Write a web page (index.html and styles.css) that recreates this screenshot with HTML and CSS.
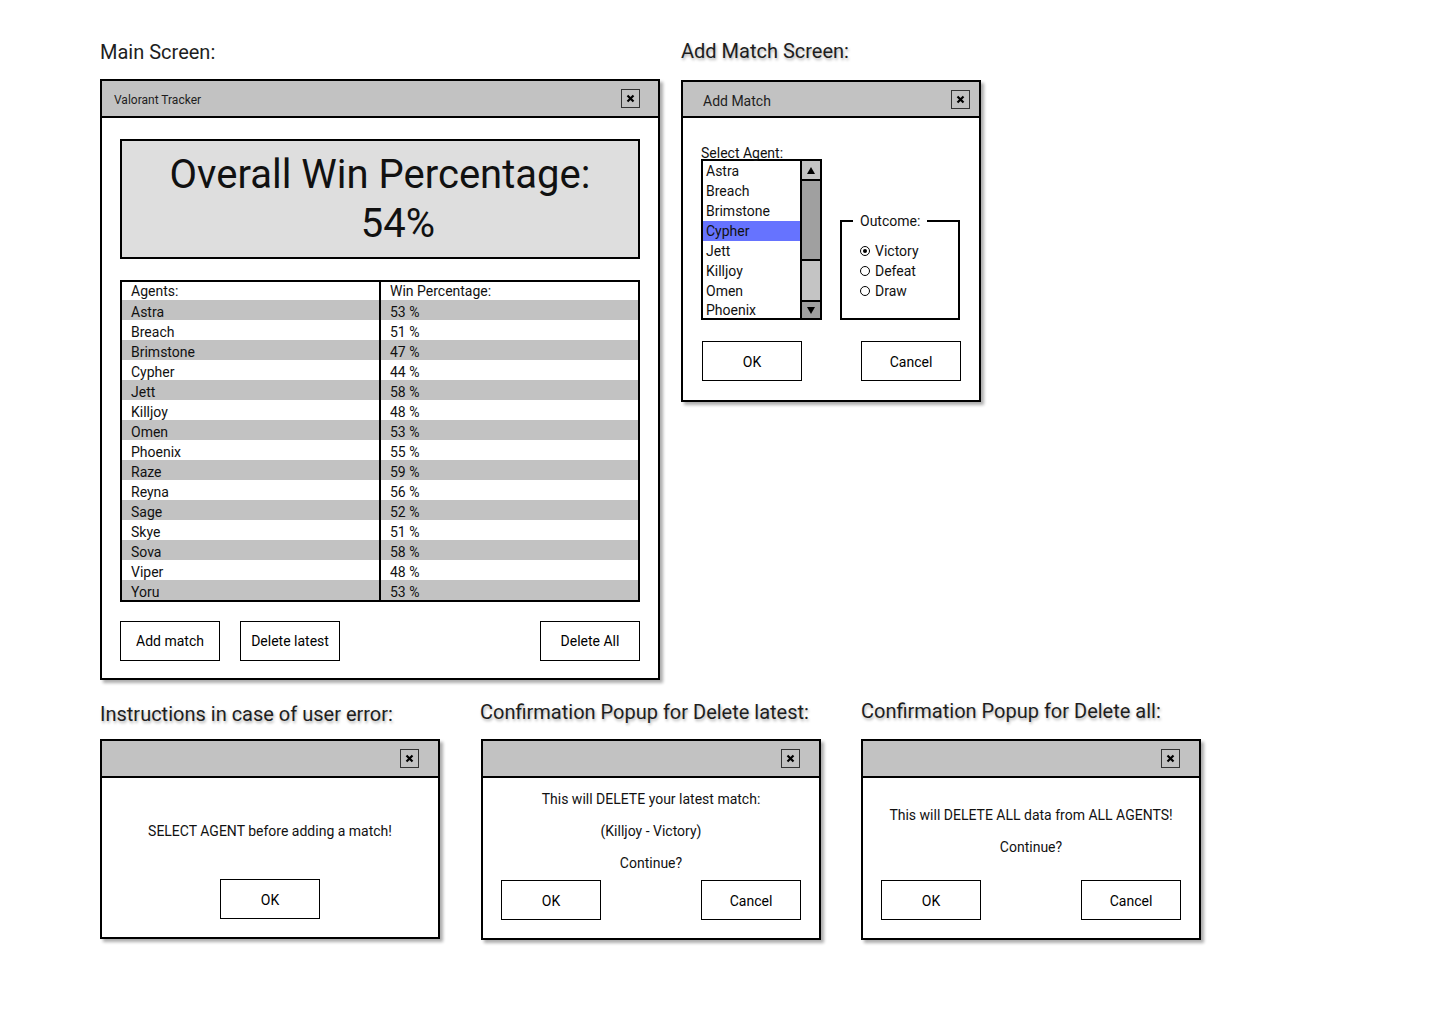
FILE: index.html
```html
<!DOCTYPE html>
<html lang="en">
<head>
<meta charset="utf-8">
<title>Valorant Tracker wireframes</title>
<link rel="stylesheet" href="styles.css">
</head>
<body>
<main class="canvas">
  <div class="row row-top">
    <section class="shot shot-main">
      <h2 class="caption cap-main">Main Screen:</h2>
      <div class="window win-main">
        <div class="titlebar bar-main">
          <span class="title title-small">Valorant Tracker</span>
          <span class="close close-main"><svg width="9" height="9" viewBox="0 0 9 9"><path d="M1.5 1.5L7.5 7.5M7.5 1.5L1.5 7.5" stroke="#000" stroke-width="2.2"/></svg></span>
        </div>
        <div class="main-body">
          <div class="overall">
            <span>Overall Win Percentage:</span>
            <span class="overall-value">54%</span>
          </div>
          <div class="table">
            <div class="trow thead"><span class="cell">Agents:</span><span class="cell cell-r">Win Percentage:</span></div>
            <div class="trow"><span class="cell">Astra</span><span class="cell cell-r">53 %</span></div>
            <div class="trow"><span class="cell">Breach</span><span class="cell cell-r">51 %</span></div>
            <div class="trow"><span class="cell">Brimstone</span><span class="cell cell-r">47 %</span></div>
            <div class="trow"><span class="cell">Cypher</span><span class="cell cell-r">44 %</span></div>
            <div class="trow"><span class="cell">Jett</span><span class="cell cell-r">58 %</span></div>
            <div class="trow"><span class="cell">Killjoy</span><span class="cell cell-r">48 %</span></div>
            <div class="trow"><span class="cell">Omen</span><span class="cell cell-r">53 %</span></div>
            <div class="trow"><span class="cell">Phoenix</span><span class="cell cell-r">55 %</span></div>
            <div class="trow"><span class="cell">Raze</span><span class="cell cell-r">59 %</span></div>
            <div class="trow"><span class="cell">Reyna</span><span class="cell cell-r">56 %</span></div>
            <div class="trow"><span class="cell">Sage</span><span class="cell cell-r">52 %</span></div>
            <div class="trow"><span class="cell">Skye</span><span class="cell cell-r">51 %</span></div>
            <div class="trow"><span class="cell">Sova</span><span class="cell cell-r">58 %</span></div>
            <div class="trow"><span class="cell">Viper</span><span class="cell cell-r">48 %</span></div>
            <div class="trow"><span class="cell">Yoru</span><span class="cell cell-r">53 %</span></div>
          </div>
          <div class="main-actions">
            <button class="btn btn-main">Add match</button>
            <button class="btn btn-main">Delete latest</button>
            <button class="btn btn-main btn-push">Delete All</button>
          </div>
        </div>
      </div>
    </section>

    <section class="shot shot-add">
      <h2 class="caption caption-shadow cap-add">Add Match Screen:</h2>
      <div class="window win-add">
        <div class="titlebar bar-add">
          <span class="title title-add">Add Match</span>
          <span class="close close-add"><svg width="9" height="9" viewBox="0 0 9 9"><path d="M1.5 1.5L7.5 7.5M7.5 1.5L1.5 7.5" stroke="#000" stroke-width="2.2"/></svg></span>
        </div>
        <div class="add-body">
          <div class="add-top">
            <div class="agent-col">
              <div class="field-label">Select Agent:</div>
              <div class="listbox">
                <div class="list-items">
                  <div class="list-item">Astra</div>
                  <div class="list-item">Breach</div>
                  <div class="list-item">Brimstone</div>
                  <div class="list-item selected">Cypher</div>
                  <div class="list-item">Jett</div>
                  <div class="list-item">Killjoy</div>
                  <div class="list-item">Omen</div>
                  <div class="list-item list-item-last">Phoenix</div>
                </div>
                <div class="scrollbar">
                  <div class="sb-up"><svg width="8" height="7" viewBox="0 0 8 7"><polygon points="0,7 4,0 8,7" fill="#000"/></svg></div>
                  <div class="sb-thumb"></div>
                  <div class="sb-track"></div>
                  <div class="sb-down"><svg width="8" height="7" viewBox="0 0 8 7"><polygon points="0,0 8,0 4,7" fill="#000"/></svg></div>
                </div>
              </div>
            </div>
            <div class="outcome">
              <span class="outcome-label">Outcome:</span>
              <div class="radios">
                <div class="radio-row"><span class="radio checked"></span>Victory</div>
                <div class="radio-row"><span class="radio"></span>Defeat</div>
                <div class="radio-row"><span class="radio"></span>Draw</div>
              </div>
            </div>
          </div>
          <div class="add-actions">
            <button class="btn">OK</button>
            <button class="btn">Cancel</button>
          </div>
        </div>
      </div>
    </section>
  </div>

  <div class="row row-bottom">
    <section class="shot">
      <h2 class="caption caption-shadow cap-b1">Instructions in case of user error:</h2>
      <div class="window popup">
        <div class="titlebar bar-popup">
          <span class="close close-popup"><svg width="9" height="9" viewBox="0 0 9 9"><path d="M1.5 1.5L7.5 7.5M7.5 1.5L1.5 7.5" stroke="#000" stroke-width="2.2"/></svg></span>
        </div>
        <div class="popup-body">
          <div class="msg">
            <p>SELECT AGENT before adding a match!</p>
          </div>
          <div class="popup-actions popup-actions-center">
            <button class="btn">OK</button>
          </div>
        </div>
      </div>
    </section>

    <section class="shot shot-b2">
      <h2 class="caption caption-shadow cap-b2">Confirmation Popup for Delete latest:</h2>
      <div class="window popup popup-tall popup-shift">
        <div class="titlebar bar-popup">
          <span class="close close-popup"><svg width="9" height="9" viewBox="0 0 9 9"><path d="M1.5 1.5L7.5 7.5M7.5 1.5L1.5 7.5" stroke="#000" stroke-width="2.2"/></svg></span>
        </div>
        <div class="popup-body">
          <div class="msg">
            <p>This will DELETE your latest match:</p>
            <p>(Killjoy - Victory)</p>
            <p>Continue?</p>
          </div>
          <div class="popup-actions">
            <button class="btn">OK</button>
            <button class="btn">Cancel</button>
          </div>
        </div>
      </div>
    </section>

    <section class="shot">
      <h2 class="caption caption-shadow cap-b3">Confirmation Popup for Delete all:</h2>
      <div class="window popup popup-tall">
        <div class="titlebar bar-popup">
          <span class="close close-popup"><svg width="9" height="9" viewBox="0 0 9 9"><path d="M1.5 1.5L7.5 7.5M7.5 1.5L1.5 7.5" stroke="#000" stroke-width="2.2"/></svg></span>
        </div>
        <div class="popup-body">
          <div class="msg">
            <p>This will DELETE ALL data from ALL AGENTS!</p>
            <p>Continue?</p>
          </div>
          <div class="popup-actions">
            <button class="btn">OK</button>
            <button class="btn">Cancel</button>
          </div>
        </div>
      </div>
    </section>
  </div>
</main>
</body>
</html>
```

FILE: styles.css
```css
* {
  box-sizing: border-box;
  margin: 0;
  padding: 0;
}

body {
  margin: 0;
  background: #ffffff;
  font-family: Roboto, "Noto Sans", "Liberation Sans", sans-serif;
  color: #000;
}

.canvas {
  width: 1440px;
  height: 1024px;
  padding: 40px 0 0 100px;
}

.row {
  display: flex;
  align-items: flex-start;
}

.row-top {
  gap: 21px;
  margin-bottom: 19px;
}

.row-bottom {
  gap: 40px;
}

.shot {
  display: flex;
  flex-direction: column;
}

.caption {
  font-size: 20px;
  font-weight: 400;
  line-height: 24px;
  color: #1e1e1e;
  white-space: nowrap;
}

.caption-shadow {
  text-shadow: 1px 2px 3px rgba(0, 0, 0, 0.32);
}

.cap-main { margin-bottom: 15px; }
.cap-add { margin-top: -1px; margin-bottom: 17px; }
.cap-b1 { margin-top: 3px; margin-bottom: 13px; }
.cap-b2 { margin-top: 1px; margin-bottom: 15px; }
.cap-b3 { margin-top: 0; margin-bottom: 16px; }

/* ---------- window chrome ---------- */
.window {
  border: 2px solid #000;
  background: #fff;
  box-shadow: 3px 3px 3px rgba(0, 0, 0, 0.32);
  display: flex;
  flex-direction: column;
}

.titlebar {
  height: 37px;
  flex: none;
  background: #c2c2c2;
  border-bottom: 2px solid #000;
  display: flex;
  align-items: center;
  justify-content: space-between;
}

.bar-add { height: 36px; }

.bar-popup { justify-content: flex-end; }

.title {
  color: #1e1e1e;
  white-space: nowrap;
}

.title-small {
  font-size: 12px;
  padding-left: 12px;
  padding-top: 2px;
}

.title-add {
  font-size: 14px;
  padding-left: 20px;
  padding-top: 3px;
}

.close {
  width: 19px;
  height: 19px;
  border: 1px solid #333;
  display: flex;
  align-items: center;
  justify-content: center;
}

.close-main { margin-right: 18px; }
.close-add { margin-right: 9px; }
.close-popup { margin-right: 19px; }

.btn {
  width: 100px;
  height: 40px;
  border: 1px solid #000;
  background: #fff;
  font-family: Roboto, "Noto Sans", "Liberation Sans", sans-serif;
  font-size: 14px;
  color: #000;
  display: flex;
  align-items: center;
  justify-content: center;
  padding-top: 1px;
  cursor: pointer;
}

.btn-main {
  padding-top: 0;
}

/* ---------- main screen ---------- */
.win-main {
  width: 560px;
  height: 601px;
}

.main-body {
  flex: 1;
  padding: 21px 18px 17px;
  display: flex;
  flex-direction: column;
}

.overall {
  height: 120px;
  border: 2px solid #000;
  background: #dedede;
  display: flex;
  flex-direction: column;
  align-items: center;
  justify-content: center;
  font-size: 40px;
  line-height: 49px;
  color: #111;
}

.overall-value {
  margin-left: 36px;
}

.table {
  margin-top: 21px;
  border: 2px solid #000;
  font-size: 14px;
  color: #111;
}

.trow {
  display: grid;
  grid-template-columns: 257px 1fr;
  height: 20px;
  line-height: 20px;
}

.trow:nth-child(even) {
  background: #c2c2c2;
}

.thead {
  height: 18px;
  line-height: 18px;
}

.cell {
  padding-left: 9px;
  padding-top: 2px;
  white-space: nowrap;
  overflow: visible;
}

.thead .cell {
  padding-top: 0;
}

.cell-r {
  border-left: 2px solid #000;
}

.main-actions {
  margin-top: 19px;
  display: flex;
  gap: 20px;
}

.btn-push {
  margin-left: auto;
}

/* ---------- add match ---------- */
.win-add {
  width: 300px;
  height: 322px;
}

.add-body {
  flex: 1;
  padding: 30px 18px 19px;
  display: flex;
  flex-direction: column;
}

.add-top {
  display: flex;
  align-items: flex-end;
}

.field-label {
  font-size: 14px;
  line-height: 11px;
  color: #111;
  white-space: nowrap;
}

.listbox {
  width: 121px;
  height: 161px;
  border: 2px solid #000;
  display: flex;
  overflow: hidden;
}

.list-items {
  flex: 1;
  overflow: hidden;
}

.list-item {
  height: 20px;
  line-height: 20px;
  padding-left: 3px;
  font-size: 14px;
  color: #111;
}

.list-item-last {
  line-height: 19px;
}

.list-item.selected {
  background: #6673ff;
}

.scrollbar {
  width: 20px;
  flex: none;
  border-left: 2px solid #000;
  display: flex;
  flex-direction: column;
}

.sb-up {
  height: 20px;
  background: #c4c4c4;
  border-bottom: 2px solid #000;
  display: flex;
  align-items: center;
  justify-content: center;
}

.sb-thumb {
  height: 80px;
  background: #a0a0a0;
  border-bottom: 2px solid #000;
}

.sb-track {
  flex: 1;
  background: #c4c4c4;
}

.sb-down {
  height: 18px;
  background: #a0a0a0;
  border-top: 2px solid #000;
  display: flex;
  align-items: center;
  justify-content: center;
}

.outcome {
  width: 120px;
  height: 100px;
  margin-left: 18px;
  border: 2px solid #000;
  padding-left: 18px;
}

.outcome-label {
  display: block;
  width: fit-content;
  margin: -9px 0 0 -7px;
  padding: 0 7px;
  background: #fff;
  font-size: 14px;
  line-height: 16px;
  color: #111;
}

.radios {
  margin-top: 12px;
}

.radio-row {
  display: flex;
  align-items: center;
  height: 20px;
  font-size: 14px;
  color: #111;
}

.radio {
  width: 10px;
  height: 10px;
  border: 1px solid #000;
  border-radius: 50%;
  margin-right: 5px;
  display: flex;
  align-items: center;
  justify-content: center;
}

.radio.checked::after {
  content: "";
  width: 4px;
  height: 4px;
  border-radius: 50%;
  background: #000;
}

.add-actions {
  margin-top: 21px;
  display: flex;
  justify-content: space-between;
  padding-left: 1px;
}

/* ---------- popups ---------- */
.popup {
  width: 340px;
  height: 200px;
}

.popup-tall {
  height: 201px;
}

.popup-shift {
  margin-left: 1px;
}

.popup-body {
  flex: 1;
  padding: 4px 18px 18px;
  display: flex;
  flex-direction: column;
}

.msg {
  flex: 1;
  display: flex;
  flex-direction: column;
  align-items: center;
  justify-content: center;
  font-size: 14px;
  line-height: 32px;
  color: #111;
  white-space: nowrap;
}

.popup-actions {
  display: flex;
  justify-content: space-between;
}

.popup-actions-center {
  justify-content: center;
}
```
